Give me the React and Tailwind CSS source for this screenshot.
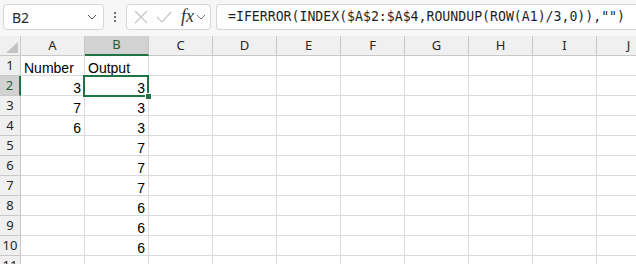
import { useState } from "react";

const COLS = ["A", "B", "C", "D", "E", "F", "G", "H", "I", "J"];
const colA = { 1: "Number", 2: "3", 3: "7", 4: "6" };
const colB = { 1: "Output", 2: "3", 3: "3", 4: "3", 5: "7", 6: "7", 7: "7", 8: "6", 9: "6", 10: "6" };

function Chevron({ className }) {
  return (
    <svg width="10" height="6" viewBox="0 0 10 6" className={className}>
      <path d="M1 1 L5 5 L9 1" fill="none" stroke="currentColor" strokeWidth="1" />
    </svg>
  );
}

function Toolbar({ name }) {
  return (
    <div className="h-[36px] flex items-start pt-[4px] bg-[#f7f7f7]">
      <div className="ml-[3px] w-[101px] h-[26px] rounded-[4px] border border-[#d6d6d6] bg-white flex items-center justify-between pl-[8px] pr-[6px] text-[14px] text-[#262626] font-['Noto_Sans',sans-serif]">
        <span>{name}</span>
        <Chevron className="text-[#555]" />
      </div>
      <div className="w-[22px] h-[26px] flex flex-col items-center justify-center gap-[2px]">
        <span className="w-[2px] h-[2px] bg-[#444] rounded-full" />
        <span className="w-[2px] h-[2px] bg-[#444] rounded-full" />
        <span className="w-[2px] h-[2px] bg-[#444] rounded-full" />
      </div>
      <div className="w-[85px] h-[26px] rounded-[4px] border border-[#d6d6d6] bg-white flex items-center pl-[6px]">
        <svg width="14" height="14" viewBox="0 0 14 14" className="ml-[1px]">
          <path d="M1 1 L13 13 M13 1 L1 13" stroke="#c4c4c4" strokeWidth="1.2" fill="none" />
        </svg>
        <svg width="16" height="14" viewBox="0 0 16 14" className="ml-[8px]">
          <path d="M1 7 L6 12 L15 2" stroke="#c4c4c4" strokeWidth="1.2" fill="none" />
        </svg>
        <span className="ml-[9px] text-[18px] italic text-[#333] font-['Liberation_Serif',serif] leading-none pb-[2px]">fx</span>
        <Chevron className="ml-[2px] text-[#777]" />
      </div>
      <div className="ml-[5px] flex-1 h-[26px] rounded-l-[4px] border border-r-0 border-[#d6d6d6] bg-white flex items-center pl-[11px] text-[13.2px] text-[#1f1f1f] font-['DejaVu_Sans_Mono',monospace] whitespace-nowrap">
        =IFERROR(INDEX($A$2:$A$4,ROUNDUP(ROW(A1)/3,0)),"")
      </div>
    </div>
  );
}

function HeaderRow({ selCol }) {
  return (
    <div className="flex h-[20px] bg-[#f0f0f0] font-['Noto_Sans',sans-serif] text-[13px] text-[#262626]">
      <div className="w-[21px] shrink-0 border-r border-b border-[#c8c8c8] relative">
        <svg width="14" height="12" viewBox="0 0 14 12" className="absolute left-[5px] top-[6px]">
          <path d="M13 0 L13 11 L1 11 Z" fill="#c3c3c3" />
        </svg>
      </div>
      {COLS.map((c) => (
        <div
          key={c}
          className={
            c === selCol
              ? "w-[64px] shrink-0 flex items-center justify-center bg-[#d2d2d2] border-r border-[#c8c8c8] border-b-2 border-b-[#217346] text-[#1e5e3a]"
              : "w-[64px] shrink-0 flex items-center justify-center border-r border-b border-[#c8c8c8]"
          }
        >
          {c}
        </div>
      ))}
    </div>
  );
}

function Row({ n, selected }) {
  return (
    <div className="flex h-[20px] text-[14px] leading-none text-black font-['Liberation_Sans',sans-serif]">
      <div
        className={
          selected
            ? "w-[21px] shrink-0 flex items-center justify-center bg-[#d2d2d2] border-b border-[#c8c8c8] border-r-2 border-r-[#217346] text-[#1e5e3a] text-[13px] font-['Noto_Sans',sans-serif]"
            : "w-[21px] shrink-0 flex items-center justify-center bg-[#f0f0f0] border-r border-b border-[#c8c8c8] text-[#262626] text-[13px] font-['Noto_Sans',sans-serif]"
        }
      >
        {n}
      </div>
      {COLS.map((c) => {
        const v = c === "A" ? colA[n] : c === "B" ? colB[n] : undefined;
        const isText = v && isNaN(Number(v));
        return (
          <div
            key={c}
            className={
              isText
                ? "w-[64px] shrink-0 border-r border-b border-[#dadada] flex items-end pl-[3px] whitespace-nowrap"
                : "w-[64px] shrink-0 border-r border-b border-[#dadada] flex items-end justify-end pr-[3px]"
            }
          >
            {v}
          </div>
        );
      })}
    </div>
  );
}

export default function App() {
  const [sel] = useState({ col: "B", row: 2 });
  const rows = Array.from({ length: 11 }, (_, i) => i + 1);

  return (
    <div className="w-[636px] h-[264px] overflow-hidden bg-white">
      <Toolbar name={`${sel.col}${sel.row}`} />
      <div className="relative">
        <HeaderRow selCol={sel.col} />
        {rows.map((n) => (
          <Row key={n} n={n} selected={n === sel.row} />
        ))}
        {/* active cell outline */}
        <div className="absolute left-[83px] top-[39px] w-[66px] h-[22px] border-2 border-[#217346] pointer-events-none" />
        <div className="absolute left-[145px] top-[57px] w-[7px] h-[7px] bg-[#217346] border border-white" />
      </div>
    </div>
  );
}
